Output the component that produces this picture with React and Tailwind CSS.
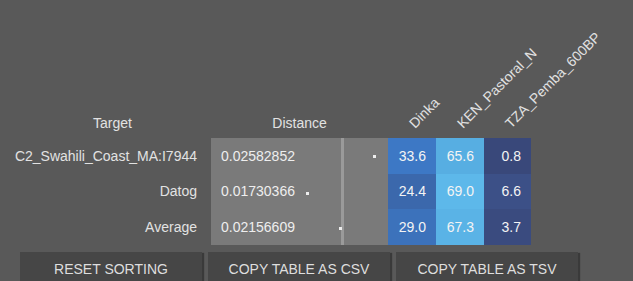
import React from "react";

const rows = [
  {
    target: "C2_Swahili_Coast_MA:I7944",
    distance: "0.02582852",
    dot: { left: 162, top: 17 },
    values: [
      { v: "33.6", bg: "bg-[#3d78c5]" },
      { v: "65.6", bg: "bg-[#57aee2]" },
      { v: "0.8", bg: "bg-[#39487a]" },
    ],
  },
  {
    target: "Datog",
    distance: "0.01730366",
    dot: { left: 95, top: 18 },
    values: [
      { v: "24.4", bg: "bg-[#3b68ac]" },
      { v: "69.0", bg: "bg-[#5db8ea]" },
      { v: "6.6", bg: "bg-[#3c5087]" },
    ],
  },
  {
    target: "Average",
    distance: "0.02156609",
    dot: { left: 128, top: 18 },
    values: [
      { v: "29.0", bg: "bg-[#3c72bb]" },
      { v: "67.3", bg: "bg-[#5ab3e6]" },
      { v: "3.7", bg: "bg-[#3a4b7f]" },
    ],
  },
];

const sources = ["Dinka", "KEN_Pastoral_N", "TZA_Pemba_600BP"];
const widths = ["w-[48px]", "w-[48px]", "w-[47px]"];

const buttons = ["RESET SORTING", "COPY TABLE AS CSV", "COPY TABLE AS TSV"];

const App = () => {
  return (
    <div
      className="w-full h-[281px] bg-[#595959] overflow-hidden text-[14px] leading-[16px] text-[#e2e2e2]"
      style={{ fontFamily: '"Liberation Sans", Arial, sans-serif' }}
    >
      <div className="pl-[14px]">
        {/* header */}
        <div className="flex h-[138px]">
          <div className="w-[197px] flex items-end justify-center pb-[7px]">Target</div>
          <div className="w-[177px] flex items-end justify-center pb-[7px]">Distance</div>
          {sources.map((s, i) => (
            <div key={s} className={`${widths[i]} flex items-end pl-[29px] pb-[7px]`}>
              <span className="inline-block whitespace-nowrap origin-bottom-left -rotate-45">{s}</span>
            </div>
          ))}
        </div>

        {/* rows */}
        {rows.map((r) => (
          <div key={r.target} className="flex h-[35.6px]">
            <div className="w-[197px] flex items-center justify-end pr-[14px] whitespace-nowrap">
              {r.target}
            </div>
            <div className="w-[177px] relative flex items-center pl-[10px] bg-[#7a7a7a] text-[#eeeeee]">
              {r.distance}
              <div className="absolute left-[130px] top-0 bottom-0 w-[3px] bg-[#9a9a9a]"></div>
              <div
                className="absolute w-[3px] h-[3px] bg-[#ededed]"
                style={{ left: r.dot.left, top: r.dot.top }}
              ></div>
            </div>
            {r.values.map((c, i) => (
              <div
                key={i}
                className={`${widths[i]} ${c.bg} flex items-center justify-end pr-[10px] text-[#f4f4f4]`}
              >
                {c.v}
              </div>
            ))}
          </div>
        ))}
      </div>

      {/* buttons */}
      <div className="flex gap-[6px] pl-[20px] mt-[7px]">
        {buttons.map((b) => (
          <button
            key={b}
            className="w-[182px] h-[34px] bg-[#464646] text-[#dedede] text-[14px] shadow-[2px_1px_1px_rgba(0,0,0,0.35)] pt-[1px]"
            style={{ fontFamily: '"Liberation Sans", Arial, sans-serif' }}
          >
            {b}
          </button>
        ))}
      </div>
    </div>
  );
};

export default App;
